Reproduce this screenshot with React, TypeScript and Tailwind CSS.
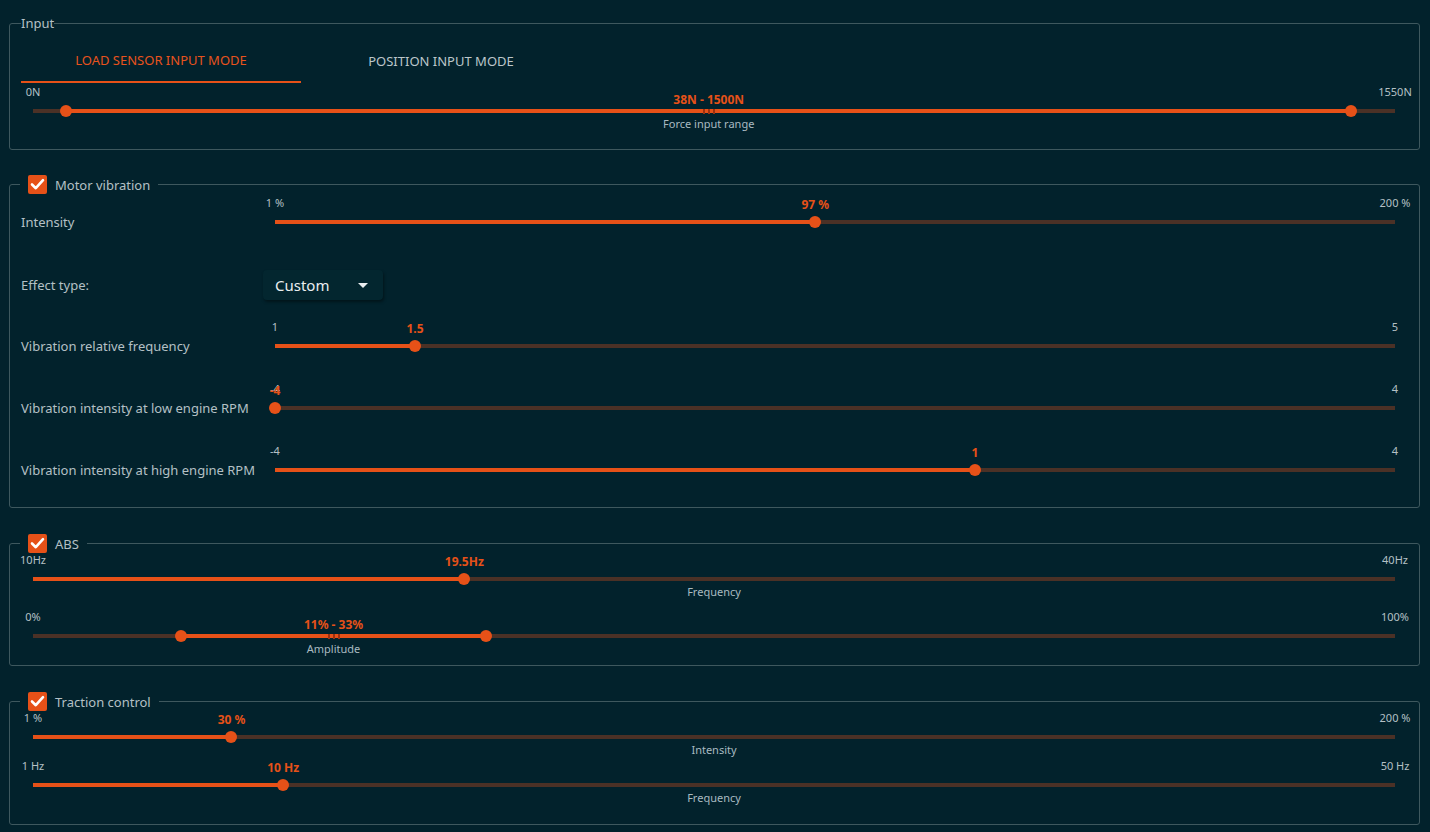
import React from 'react';

type SliderProps = {
  min: number;
  max: number;
  values: number[];
  minLabel: string;
  maxLabel: string;
  valueLabel: string;
  caption?: string;
};

const Slider: React.FC<SliderProps> = ({ min, max, values, minLabel, maxLabel, valueLabel, caption }) => {
  const pct = values.map((v) => ((v - min) / (max - min)) * 100);
  const range = pct.length > 1;
  const start = range ? pct[0] : 0;
  const end = range ? pct[1] : pct[0];
  const mid = range ? (start + end) / 2 : 50;

  return (
    <div className="flex flex-col">
      {/* end labels, centred on the track ends */}
      <div className="flex justify-between h-[14px] text-[11px] leading-[14px] text-[#b4c0c5]">
        <span className="w-0 flex justify-center whitespace-nowrap">{minLabel}</span>
        <span className="w-0 flex justify-center whitespace-nowrap">{maxLabel}</span>
      </div>

      <div className="relative h-3 mt-1.5">
        <div className="absolute inset-x-0 top-1 h-1 bg-[#4b3126]" />
        <div className="absolute top-1 h-1 bg-[#e65118]" style={{ left: `${start}%`, width: `${end - start}%` }} />
        {range && (
          <div className="absolute top-1 flex gap-[3px] -translate-x-1/2" style={{ left: `${mid}%` }}>
            <span className="w-[2px] h-[5px] bg-[#9c300f]" />
            <span className="w-[2px] h-[5px] bg-[#9c300f]" />
            <span className="w-[2px] h-[5px] bg-[#9c300f]" />
          </div>
        )}
        {pct.map((p, i) => (
          <div
            key={i}
            className="absolute top-0 w-3 h-3 -ml-1.5 rounded-full bg-[#e65118]"
            style={{ left: `${p}%` }}
          />
        ))}
        <div
          className={`absolute w-0 flex justify-center whitespace-nowrap text-[12px] leading-[14px] font-bold text-[#e65118] ${
            range ? 'top-[-12px]' : 'top-[-18px]'
          }`}
          style={{ left: `${range ? mid : end}%` }}
        >
          {valueLabel}
        </div>
      </div>

      {caption && (
        <div className="relative h-[14px]">
          <div
            className="absolute w-0 flex justify-center whitespace-nowrap text-[11px] leading-[14px] text-[#a9bac1]"
            style={{ left: `${mid}%` }}
          >
            {caption}
          </div>
        </div>
      )}
    </div>
  );
};

const CheckLegend: React.FC<{ title: string }> = ({ title }) => (
  <legend className="ml-[10px] px-2 h-5 flex items-center gap-2">
    <span className="w-[19px] h-[19px] rounded-[2px] bg-[#e65118] flex items-center justify-center">
      <svg width="19" height="19" viewBox="0 0 19 19" fill="none">
        <path d="M4 9.5 L7.8 13.2 L15 5.2" stroke="#ffffff" strokeWidth="2.6" strokeLinecap="round" strokeLinejoin="round" />
      </svg>
    </span>
    <span className="text-[13px] leading-5 pt-px text-[#b4c0c5]">{title}</span>
  </legend>
);

const SettingRow: React.FC<{ label: string; className?: string; children: React.ReactNode }> = ({
  label,
  className = '',
  children,
}) => (
  <div className={`flex items-end pl-[11px] pr-[24px] ${className}`}>
    <div className="w-[254px] h-3 leading-3 text-[13px] text-[#b4c0c5] whitespace-nowrap">{label}</div>
    <div className="flex-1">{children}</div>
  </div>
);

const App: React.FC = () => {
  return (
    <div className="min-h-screen bg-[#02222c] pt-[15px] pb-2 font-['Noto_Sans',sans-serif]">
      {/* Input */}
      <fieldset className="ml-[9px] mr-[10px] border border-[#3e585e] rounded-[3px] pb-[18px]">
        <legend className="ml-[11px] h-4 leading-4 text-[13px] text-[#b4c0c5]">Input</legend>
        <div className="flex ml-[11px] mt-[4px]">
          <div className="w-[280px] h-12 pt-[6px] flex items-center justify-center border-b-2 border-[#e65118] text-[13px] text-[#e8531d] uppercase">
            Load sensor input mode
          </div>
          <div className="w-[280px] h-12 pt-[6px] flex items-center justify-center text-[13px] text-[#bcc6ca] uppercase">
            Position input mode
          </div>
        </div>
        <div className="mt-[2px] pl-[23px] pr-[24px]">
          <Slider
            min={0}
            max={1550}
            values={[38, 1500]}
            minLabel="0N"
            maxLabel="1550N"
            valueLabel="38N - 1500N"
            caption="Force input range"
          />
        </div>
      </fieldset>

      {/* Motor vibration */}
      <fieldset className="mt-[24px] ml-[9px] mr-[10px] border border-[#3e585e] rounded-[3px] pb-[31px]">
        <CheckLegend title="Motor vibration" />
        <SettingRow label="Intensity" className="mt-[2px]">
          <Slider min={1} max={200} values={[97]} minLabel="1 %" maxLabel="200 %" valueLabel="97 %" />
        </SettingRow>
        <div className="flex items-center pl-[11px] mt-[42px]">
          <div className="w-[254px] pt-px text-[13px] text-[#b4c0c5]">Effect type:</div>
          <div className="-ml-3 w-[120px] h-[30px] rounded-[4px] bg-[#03262f] shadow-[1px_2px_3px_rgba(0,0,0,0.4)] flex items-center justify-between pl-3 pr-[15px]">
            <span className="text-[15px] text-[#e9eef0]">Custom</span>
            <svg width="10" height="5" viewBox="0 0 10 5">
              <polygon points="0,0 10,0 5,5" fill="#e9eef0" />
            </svg>
          </div>
        </div>
        <SettingRow label="Vibration relative frequency" className="mt-[20px]">
          <Slider min={1} max={5} values={[1.5]} minLabel="1" maxLabel="5" valueLabel="1.5" />
        </SettingRow>
        <SettingRow label="Vibration intensity at low engine RPM" className="mt-[30px]">
          <Slider min={-4} max={4} values={[-4]} minLabel="-4" maxLabel="4" valueLabel="-4" />
        </SettingRow>
        <SettingRow label="Vibration intensity at high engine RPM" className="mt-[30px]">
          <Slider min={-4} max={4} values={[1]} minLabel="-4" maxLabel="4" valueLabel="1" />
        </SettingRow>
      </fieldset>

      {/* ABS */}
      <fieldset className="mt-[25px] ml-[9px] mr-[10px] border border-[#3e585e] rounded-[3px] pb-[9px]">
        <CheckLegend title="ABS" />
        <div className="pl-[23px] pr-[24px]">
          <Slider
            min={10}
            max={40}
            values={[19.5]}
            minLabel="10Hz"
            maxLabel="40Hz"
            valueLabel="19.5Hz"
            caption="Frequency"
          />
          <div className="mt-[11px]">
            <Slider
              min={0}
              max={100}
              values={[10.87, 33.26]}
              minLabel="0%"
              maxLabel="100%"
              valueLabel="11% - 33%"
              caption="Amplitude"
            />
          </div>
        </div>
      </fieldset>

      {/* Traction control */}
      <fieldset className="mt-[25px] ml-[9px] mr-[10px] border border-[#3e585e] rounded-[3px] pb-[19px]">
        <CheckLegend title="Traction control" />
        <div className="pl-[23px] pr-[24px]">
          <Slider
            min={1}
            max={200}
            values={[30]}
            minLabel="1 %"
            maxLabel="200 %"
            valueLabel="30 %"
            caption="Intensity"
          />
          <div className="mt-[2px]">
            <Slider
              min={1}
              max={50}
              values={[10]}
              minLabel="1 Hz"
              maxLabel="50 Hz"
              valueLabel="10 Hz"
              caption="Frequency"
            />
          </div>
        </div>
      </fieldset>
    </div>
  );
};

export default App;
